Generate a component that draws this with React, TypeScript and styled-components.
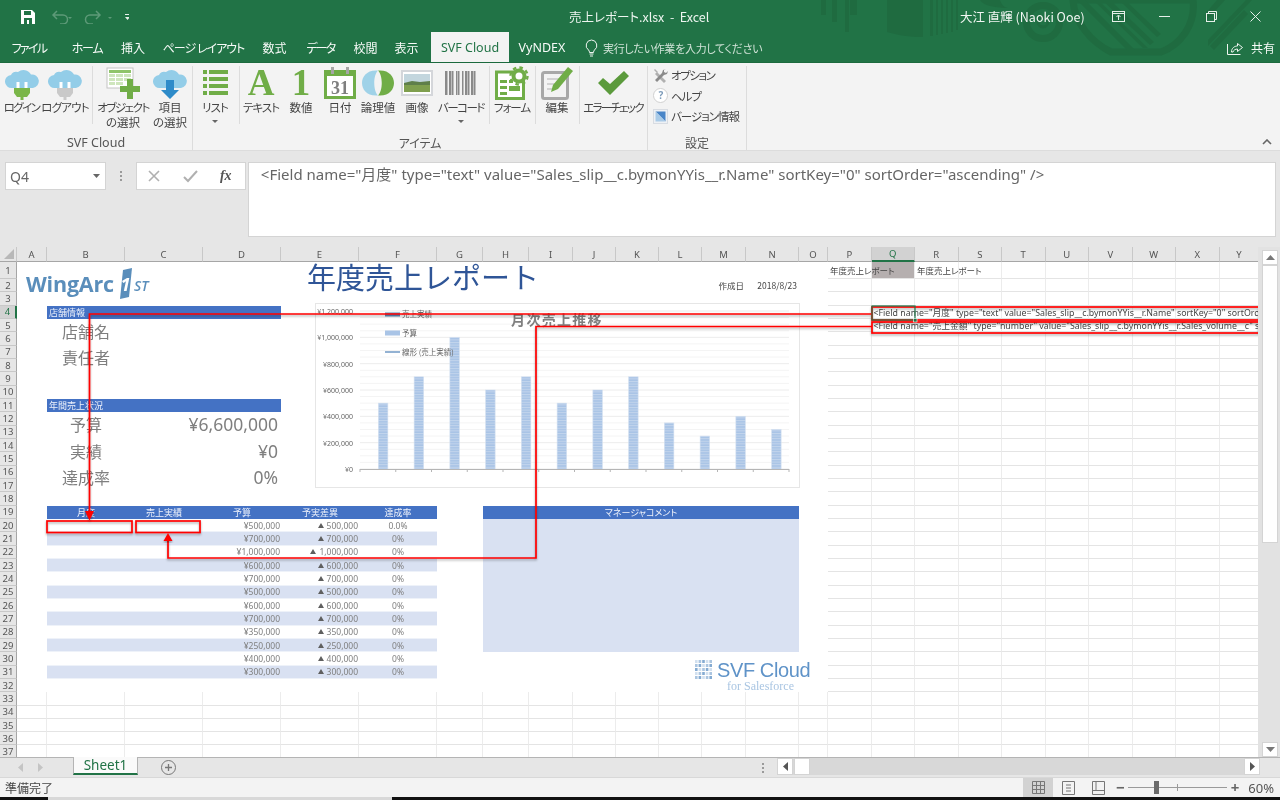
import styled, { createGlobalStyle } from 'styled-components';
import { Fragment } from 'react';

const GlobalStyle = createGlobalStyle`
  html, body { margin: 0; padding: 0; width: 1280px; height: 800px; overflow: hidden; background: #fff; }
  * { box-sizing: border-box; }
  body {
    font-family: "Noto Sans CJK JP", "Noto Sans", sans-serif;
    font-feature-settings: "palt" 1;
    color: #444;
  }
`;

const COLUMNS: [string, number][] = [
  ['A', 30], ['B', 78], ['C', 78], ['D', 78], ['E', 78], ['F', 78], ['G', 46], ['H', 46],
  ['I', 44], ['J', 43], ['K', 43], ['L', 43], ['M', 44], ['N', 53], ['O', 29], ['P', 43.5],
  ['Q', 43.5], ['R', 43.5], ['S', 43.5], ['T', 43.5], ['U', 43.5], ['V', 43.5], ['W', 43.5],
  ['X', 43.5], ['Y', 40],
];
const ROW_COUNT = 37;
const BUDGET = [500000, 700000, 1000000, 600000, 700000, 500000, 600000, 700000, 350000, 250000, 400000, 300000];
const yen = (n: number) => n.toLocaleString('en-US');

const GRID_TEMPLATE = `
  grid-template-columns: 17px ${COLUMNS.map(c => `${c[1]}px`).join(' ')};
  grid-template-rows: 15px 17px repeat(36, 13.333px);
`;

const Page = styled.div`
  width: 1280px;
  height: 800px;
  display: flex;
  flex-direction: column;
  overflow: hidden;
  background: #e6e6e6;
  filter: blur(0.3px);
`;

/* ---------- green header ---------- */
const Header = styled.header`
  position: relative;
  height: 63px;
  background: #217346;
  border-bottom: 1px solid #1c6a3e;
  color: #fff;
  overflow: hidden;
`;
const Pattern = styled.svg`
  position: absolute;
  left: 810px;
  top: 0;
`;
const TitleBar = styled.div`
  position: relative;
  height: 33px;
  display: flex;
  align-items: center;
  font-size: 12px;
`;
const Qat = styled.div`
  display: flex;
  align-items: center;
  width: 569px;
  padding-left: 21px;
`;
const DocTitle = styled.div`
  width: 391px;
  font-size: 12.5px;
  color: #eef5f0;
  white-space: pre;
`;
const UserName = styled.div`
  width: 152px;
  font-size: 12.5px;
  color: #f2f7f3;
  white-space: pre;
`;
const WinControls = styled.div`
  display: flex;
  align-items: center;
  gap: 31px;
`;
const TabRow = styled.nav`
  position: relative;
  height: 29px;
  display: flex;
  align-items: flex-end;
  font-size: 12px;
`;
const Tab = styled.div<{ $w: number; $ls?: number }>`
  width: ${p => p.$w}px;
  height: 29px;
  display: flex;
  align-items: center;
  justify-content: center;
  white-space: nowrap;
  letter-spacing: ${p => p.$ls ?? 0}px;
  color: #f6faf7;
`;
const ActiveTab = styled(Tab)`
  height: 30px;
  background: #f3f3f3;
  color: #217346;
  font-family: "Noto Sans", sans-serif;
  font-size: 12.5px;
`;
const LatinTab = styled(Tab)`
  font-family: "Noto Sans", sans-serif;
  font-size: 12.5px;
`;
const Hint = styled.div`
  display: flex;
  align-items: center;
  gap: 5px;
  margin-left: 10px;
  height: 29px;
  color: #cfe2d6;
  font-size: 11px;
  letter-spacing: -0.3px;
  white-space: nowrap;
`;
const Share = styled.div`
  margin-left: auto;
  padding-right: 5px;
  display: flex;
  align-items: center;
  gap: 8px;
  height: 29px;
  color: #f6faf7;
`;

/* ---------- ribbon ---------- */
const Ribbon = styled.section`
  position: relative;
  height: 88px;
  display: flex;
  background: #f3f3f3;
  border-bottom: 1px solid #dcdcdc;
  font-size: 11.5px;
  color: #444;
`;
const Group = styled.div<{ $w: number }>`
  width: ${p => p.$w}px;
  height: 85px;
  margin-top: 3px;
  display: flex;
  flex-direction: column;
  border-right: 1px solid #dcdcdc;
`;
const GroupBody = styled.div`
  flex: 1;
  display: flex;
`;
const GroupLabel = styled.div`
  height: 15px;
  line-height: 14px;
  text-align: center;
  font-size: 12px;
  color: #555;
`;
const LatinGroupLabel = styled(GroupLabel)`
  font-family: "Noto Sans", sans-serif;
  font-size: 12.5px;
`;
const RibbonButton = styled.div<{ $w: number }>`
  width: ${p => p.$w}px;
  display: flex;
  flex-direction: column;
  align-items: center;
  text-align: center;
`;
const IconSlot = styled.div`
  height: 34px;
  display: flex;
  align-items: center;
  justify-content: center;
`;
const ButtonLabel = styled.div<{ $ls?: number }>`
  line-height: 15px;
  white-space: nowrap;
  letter-spacing: ${p => p.$ls ?? 0}px;
`;
const Caret = styled.div`
  margin-top: 5px;
  width: 0;
  height: 0;
  border-left: 3px solid transparent;
  border-right: 3px solid transparent;
  border-top: 3px solid #666;
`;
const Divider = styled.div<{ $w: number }>`
  width: ${p => p.$w}px;
  height: 58px;
  display: flex;
  justify-content: center;
  &::after {
    content: '';
    width: 1px;
    background: #dcdcdc;
  }
`;
const BigLetter = styled.span`
  font-family: "Liberation Serif", serif;
  font-weight: 700;
  font-size: 37px;
  line-height: 34px;
  color: #70ad47;
`;
const SmallList = styled.div`
  display: flex;
  flex-direction: column;
  margin-top: -1px;
  padding-left: 5px;
`;
const SmallItem = styled.div<{ $ls: number }>`
  height: 20.5px;
  display: flex;
  align-items: center;
  gap: 3px;
  white-space: nowrap;
  letter-spacing: ${p => p.$ls}px;
`;
const Collapse = styled.svg`
  position: absolute;
  right: 8px;
  bottom: 5px;
`;

/* ---------- formula bar ---------- */
const FormulaBar = styled.section`
  height: 96px;
  padding: 11px 4px 0 5px;
  display: flex;
  align-items: flex-start;
  background: #e6e6e6;
`;
const NameBox = styled.div`
  width: 101px;
  height: 28px;
  display: flex;
  align-items: center;
  justify-content: space-between;
  padding: 0 5px 0 4px;
  background: #fff;
  border: 1px solid #d4d4d4;
  font-family: "Noto Sans", sans-serif;
  font-size: 14px;
  color: #666;
`;
const Dots = styled.div`
  width: 30px;
  height: 28px;
  display: flex;
  flex-direction: column;
  align-items: center;
  justify-content: center;
  gap: 2px;
  span { width: 2px; height: 2px; background: #9a9a9a; }
`;
const FxBox = styled.div`
  width: 110px;
  height: 28px;
  display: flex;
  align-items: center;
  gap: 22px;
  padding: 0 0 0 10px;
  background: #fff;
  border: 1px solid #d4d4d4;
`;
const FxLabel = styled.span`
  font-family: "Liberation Serif", serif;
  font-style: italic;
  font-weight: 700;
  font-size: 14px;
  color: #555;
`;
const FormulaInput = styled.div`
  width: 1029px;
  height: 75px;
  margin-left: 2px;
  padding: 1px 0 0 12px;
  background: #fff;
  border: 1px solid #d4d4d4;
  font-family: "Noto Sans", "Noto Sans CJK JP", sans-serif;
  font-size: 15px;
  line-height: 20px;
  color: #666;
  white-space: pre;
`;

/* ---------- sheet ---------- */
const SheetArea = styled.section`
  height: 510px;
  display: flex;
`;
const SheetWrap = styled.div`
  position: relative;
  width: 1258px;
  height: 510px;
  overflow: hidden;
  background: #fff;
`;
const CellGrid = styled.div`
  display: grid;
  ${GRID_TEMPLATE}
`;
const Layer = styled.div`
  position: absolute;
  inset: 0;
  display: grid;
  pointer-events: none;
  ${GRID_TEMPLATE}
`;
const Corner = styled.div`
  background: #e6e6e6;
  border-bottom: 1px solid #a6a6a6;
  border-right: 1px solid #c8c8c8;
  position: relative;
  &::after {
    content: '';
    position: absolute;
    right: 2px;
    bottom: 2px;
    border-style: solid;
    border-width: 0 0 10px 10px;
    border-color: transparent transparent #b8b8b8 transparent;
  }
`;
const ColHead = styled.div<{ $sel?: boolean }>`
  display: flex;
  align-items: center;
  justify-content: center;
  background: ${p => (p.$sel ? '#d2d2d2' : '#e6e6e6')};
  border-right: 1px solid #c8c8c8;
  border-bottom: ${p => (p.$sel ? '2px solid #217346' : '1px solid #a6a6a6')};
  font-family: "Noto Sans", sans-serif;
  font-size: 9.5px;
  color: ${p => (p.$sel ? '#217346' : '#555')};
`;
const RowHead = styled.div<{ $sel?: boolean }>`
  display: flex;
  align-items: center;
  justify-content: center;
  background: ${p => (p.$sel ? '#d2d2d2' : '#e6e6e6')};
  border-bottom: 1px solid #c8c8c8;
  border-right: ${p => (p.$sel ? '2px solid #217346' : '1px solid #a6a6a6')};
  font-family: "Noto Sans", sans-serif;
  font-size: 9.5px;
  color: ${p => (p.$sel ? '#217346' : '#555')};
`;
const GridCell = styled.div<{ $plain?: boolean; $shade?: boolean }>`
  background: ${p => (p.$shade ? '#b5afaf' : '#fff')};
  border-right: ${p => (p.$plain ? 'none' : '1px solid #ececec')};
  border-bottom: ${p => (p.$plain ? 'none' : '1px solid #e4e4e4')};
`;
const Area = styled.div<{ $area: string }>`
  grid-area: ${p => p.$area};
  min-width: 0;
  min-height: 0;
`;
const Band = styled(Area)<{ $center?: boolean }>`
  display: flex;
  align-items: center;
  justify-content: ${p => (p.$center ? 'center' : 'flex-start')};
  padding-left: ${p => (p.$center ? '0' : '2px')};
  background: #4472c4;
  color: #eef2fb;
  font-size: 9px;
`;
const LabelCell = styled(Area)`
  display: flex;
  align-items: center;
  justify-content: center;
  padding-bottom: 3px;
  font-size: 16px;
  color: #7f7f7f;
`;
const ValueCell = styled(Area)`
  display: flex;
  align-items: center;
  justify-content: flex-end;
  padding: 0 3px 3px 0;
  font-family: "Noto Sans", sans-serif;
  font-size: 17.5px;
  color: #7f7f7f;
`;
const SheetText = styled(Area)<{ $right?: boolean }>`
  display: flex;
  align-items: center;
  justify-content: ${p => (p.$right ? 'flex-end' : 'flex-start')};
  padding: 0 2px 2px;
  font-size: 8.5px;
  color: #444;
  white-space: nowrap;
`;
const FieldText = styled(Area)`
  display: flex;
  align-items: center;
  padding-left: 2px;
  font-family: "Noto Sans", "Noto Sans CJK JP", sans-serif;
  font-size: 8.8px;
  color: #444;
  white-space: nowrap;
  overflow: hidden;
`;
const Title = styled(Area)`
  font-size: 29px;
  font-feature-settings: normal;
  line-height: 29px;
  color: #2f5597;
  white-space: nowrap;
  padding-left: 26px;
`;
const Logo = styled(Area)`
  display: flex;
  align-items: center;
  padding-left: 9px;
  color: #5a8ebb;
  font-family: "Open Sans", sans-serif;
  font-weight: 700;
`;
const LogoWord = styled.span`
  font-size: 21.5px;
  letter-spacing: -0.2px;
  margin-right: 5px;
`;
const LogoSt = styled.span`
  font-size: 14px;
  font-style: italic;
  font-weight: 600;
  margin: 3px 0 0 1px;
`;
const CommentBody = styled(Area)`
  background: #d9e1f2;
`;
const SvfLogo = styled(Area)`
  display: flex;
  padding: 8px 0 0 36px;
  gap: 4px;
`;
const SvfName = styled.div`
  font-family: "Liberation Sans", sans-serif;
  font-size: 20px;
  line-height: 21px;
  color: #5f93c8;
  letter-spacing: -0.4px;
`;
const SvfFor = styled.div`
  font-family: "Liberation Serif", serif;
  font-size: 12px;
  line-height: 11px;
  padding-left: 10px;
  color: #a9c5e2;
`;

/* ---------- report table ---------- */
const ReportTable = styled(Area)`
  display: grid;
  grid-template-columns: 78px 78px 78px 78px 78px;
  grid-template-rows: repeat(12, 13.333px);
  font-family: "Noto Sans", "Noto Sans CJK JP", sans-serif;
  font-size: 8.5px;
  color: #808080;
`;
const Td = styled.div<{ $shade: boolean; $align: string }>`
  display: flex;
  align-items: center;
  justify-content: ${p => p.$align};
  gap: 3px;
  padding-right: ${p => (p.$align === 'flex-end' ? '1px' : '0')};
  background: ${p => (p.$shade ? '#d9e1f2' : '#fff')};
  border-bottom: 1px solid #eef2f9;
`;
const Tri = styled.span`
  width: 0;
  height: 0;
  border-left: 3px solid transparent;
  border-right: 3px solid transparent;
  border-bottom: 5px solid #5f5f5f;
`;

/* ---------- overlays ---------- */
const Chart = styled.svg`
  position: absolute;
  left: 315px;
  top: 56px;
`;
const Annotations = styled.svg`
  position: absolute;
  left: 0;
  top: 0;
`;

/* ---------- scrollbars ---------- */
const VScroll = styled.aside`
  width: 22px;
  height: 510px;
  padding: 3px 2px 0 4px;
  display: flex;
  flex-direction: column;
  background: #e2e2e2;
`;
const ScrollBtn = styled.div`
  height: 15px;
  display: flex;
  align-items: center;
  justify-content: center;
  background: #fff;
  border: 1px solid #d4d4d4;
`;
const VThumb = styled.div`
  height: 278px;
  background: #fff;
  border: 1px solid #d4d4d4;
  margin-bottom: 199px;
`;

/* ---------- bottom ---------- */
const SheetTabs = styled.section`
  height: 20px;
  display: flex;
  align-items: flex-start;
  background: #e6e6e6;
  border-top: 1px solid #b4b4b4;
`;
const TabNav = styled.div`
  width: 73px;
  height: 19px;
  display: flex;
  align-items: center;
  gap: 15px;
  padding-left: 18px;
`;
const SheetTab = styled.div`
  width: 65px;
  height: 18px;
  display: flex;
  align-items: center;
  justify-content: center;
  margin-top: -1px;
  background: #fafafa;
  border: 1px solid #b4b4b4;
  border-top: none;
  border-bottom: 2px solid #217346;
  font-family: "Noto Sans", sans-serif;
  font-size: 13.5px;
  color: #217346;
`;
const AddSheet = styled.svg`
  margin: 2px 0 0 23px;
`;
const HScrollWrap = styled.div`
  margin-left: auto;
  margin-right: 20px;
  width: 511px;
  height: 19px;
  display: flex;
`;
const HDots = styled(Dots)`
  width: 28px;
  height: 19px;
`;
const HScroll = styled.div`
  flex: 1;
  height: 17px;
  display: flex;
  background: #d8d8d8;
`;
const HBtn = styled.div`
  width: 16px;
  height: 17px;
  display: flex;
  align-items: center;
  justify-content: center;
  background: #fff;
  border: 1px solid #d4d4d4;
`;
const HThumb = styled(HBtn)`
  margin: 0 auto 0 1px;
`;
const StatusBar = styled.footer`
  height: 20px;
  display: flex;
  align-items: center;
  padding-left: 5px;
  background: #f3f3f3;
  border-top: 1px solid #d8d8d8;
  font-size: 12px;
  color: #444;
`;
const StatusRight = styled.div`
  margin-left: auto;
  display: flex;
  align-items: center;
  height: 19px;
  padding-right: 6px;
`;
const ViewBtn = styled.div<{ $active?: boolean }>`
  width: 30px;
  height: 19px;
  display: flex;
  align-items: center;
  justify-content: center;
  background: ${p => (p.$active ? '#d2d2d2' : 'transparent')};
`;
const ZoomTrack = styled.div`
  position: relative;
  width: 99px;
  height: 1px;
  margin: 0 4px 0 3px;
  background: #9a9a9a;
  &::before {
    content: '';
    position: absolute;
    left: 26px;
    top: -6px;
    width: 5px;
    height: 13px;
    background: #6a6a6a;
  }
  &::after {
    content: '';
    position: absolute;
    left: 49px;
    top: -3px;
    width: 1px;
    height: 7px;
    background: #9a9a9a;
  }
`;
const ZoomSign = styled.span`
  font-family: "Noto Sans", sans-serif;
  font-size: 15px;
  font-weight: 700;
  line-height: 15px;
  color: #666;
`;
const ZoomMinus = styled(ZoomSign)`
  margin-left: 3px;
`;
const ZoomValue = styled.span`
  margin-left: 9px;
  font-family: "Noto Sans", sans-serif;
  font-size: 13px;
  color: #555;
`;
const BottomEdge = styled.div`
  height: 3px;
  display: flex;
  background: #111;
`;
const EdgeLight = styled.div`
  width: 344px;
  margin-left: 48px;
  background: #d8d8d8;
`;

/* ---------- icons ---------- */
const Cloud = () => (
  <path
    d="M7 21a6.500 6.500 0 0 1-1-13a6 6 0 0 1 7-3a8.500 8.500 0 0 1 13 2.500a6.800 6.800 0 0 1 2 13.500z"
    fill="#93cde8"
  />
);
const PlugIcon = ({ color }: { color: string }) => (
  <svg width="34" height="33" viewBox="0 0 34 33">
    <Cloud />
    <rect x="11.500" y="15" width="3" height="6.500" fill="#fff" />
    <rect x="19.500" y="15" width="3" height="6.500" fill="#fff" />
    <path d="M9 21h16v5l-3 4h-10l-3-4z" fill={color} />
    <rect x="15.500" y="30" width="3" height="3" fill={color} />
  </svg>
);
const ObjectIcon = () => (
  <svg width="34" height="33" viewBox="0 0 34 33">
    <rect x="1" y="1" width="26" height="20" fill="#fff" stroke="#c4c4c4" />
    <path d="M3 3h22v3H3z" fill="#8fc46a" />
    <path d="M3 7h6v3H3zM10 7h7v3h-7zM18 7h7v3h-7zM3 11h6v3H3zM10 11h7v3h-7zM18 11h7v3h-7zM3 15h6v3H3zM10 15h7v3h-7z" fill="#cfe6bd" />
    <path d="M21 12h6v7h7v6h-7v7h-6v-7h-7v-6h7z" fill="#70ad47" />
  </svg>
);
const ItemIcon = () => (
  <svg width="34" height="33" viewBox="0 0 34 33">
    <Cloud />
    <path d="M13 13h8v10h5l-9 9-9-9h5z" fill="#2e8bc9" />
  </svg>
);
const ListIcon = () => (
  <svg width="25" height="26" viewBox="0 0 25 26" fill="#70ad47">
    <rect x="0" y="0" width="4" height="4" />
    <rect x="6" y="0" width="19" height="4" />
    <rect x="0" y="7" width="4" height="4" />
    <rect x="6" y="7" width="19" height="4" />
    <rect x="0" y="14" width="4" height="4" />
    <rect x="6" y="14" width="19" height="4" />
    <rect x="0" y="21" width="4" height="4" />
    <rect x="6" y="21" width="19" height="4" />
  </svg>
);
const DateIcon = () => (
  <svg width="32" height="33" viewBox="0 0 32 33">
    <rect x="0" y="3" width="32" height="29" fill="#70ad47" />
    <rect x="3" y="9" width="26" height="20" fill="#fff" />
    <rect x="7" y="0" width="3" height="7" fill="#a6a6a6" />
    <rect x="22" y="0" width="3" height="7" fill="#a6a6a6" />
    <text x="16" y="27" textAnchor="middle" fontFamily="Liberation Serif, serif" fontWeight="700" fontSize="18" fill="#7f7f7f">31</text>
  </svg>
);
const LogicIcon = () => (
  <svg width="32" height="26" viewBox="0 0 32 26">
    <path d="M16 0.500C5 -0.500 0 6.500 0 13C0 19.500 5 26.500 16 25.500C11 20.500 11 5.500 16 0.500z" fill="#9fd2e8" />
    <path d="M16 0.500C27 -0.500 32 6.500 32 13C32 19.500 27 26.500 16 25.500C21 20.500 21 5.500 16 0.500z" fill="#70ad47" />
  </svg>
);
const ImageIcon = () => (
  <svg width="32" height="26" viewBox="0 0 32 26">
    <rect x="1" y="1" width="30" height="24" fill="#fff" stroke="#d4d6da" strokeWidth="2" />
    <rect x="3" y="4" width="26" height="9" fill="#c3d6de" />
    <path d="M3 13l8-2 8 1 10-1v4H3z" fill="#5f7f4a" />
    <rect x="3" y="15" width="26" height="7" fill="#7f9f4e" />
  </svg>
);
const BarcodeIcon = () => (
  <svg width="32" height="24" viewBox="0 0 32 24" fill="#8a8a8a">
    {[0, 4, 7, 11, 13, 17, 20, 23, 26, 29].map(x => (
      <rect key={x} x={x} y="0" width={x % 2 ? 1.5 : 2.5} height="24" />
    ))}
  </svg>
);
const FormIcon = () => (
  <svg width="34" height="34" viewBox="0 0 34 34">
    <path d="M1.500 6h19v8h8v18.500h-27z" fill="#fff" stroke="#70ad47" strokeWidth="3" />
    <path d="M5 14h7v3H5zM14 14h4v3h-4zM5 20h7v3H5zM14 20h11v5H14zM5 26h7v3H5z" fill="#70ad47" />
    <circle cx="24" cy="10" r="5.500" fill="#fff" stroke="#70ad47" strokeWidth="4" />
    <circle cx="24" cy="10" r="8.500" fill="none" stroke="#70ad47" strokeWidth="2.400" strokeDasharray="3.500 3.200" />
  </svg>
);
const EditIcon = () => (
  <svg width="33" height="33" viewBox="0 0 33 33">
    <rect x="1.500" y="5.500" width="25" height="26" rx="2" fill="#f3f3f3" stroke="#a8a8a8" strokeWidth="3" />
    <path d="M6 12h16M6 17h10M6 22h8" stroke="#c8c8c8" strokeWidth="1.500" />
    <path d="M27 0l5 4-15 18-7 3 2-7z" fill="#70ad47" />
  </svg>
);
const CheckIcon = () => (
  <svg width="31" height="24" viewBox="0 0 31 24">
    <path d="M0 12l5-5 7 6L26 0l5 5-19 19z" fill="#5b9a3c" />
  </svg>
);
const ToolsIcon = () => (
  <svg width="15" height="15" viewBox="0 0 15 15">
    <path d="M2 1l3 3-1 1L1 2zM4 4l9 9-2 2-9-9z" fill="#b0b0b0" />
    <path d="M13 1l-3 1-1 3-7 7 2 2 7-7 3-1 1-3-2 2-2-1 0-2z" fill="#8a8a8a" />
  </svg>
);
const HelpIcon = () => (
  <svg width="15" height="15" viewBox="0 0 15 15">
    <circle cx="7.500" cy="7.500" r="7" fill="#fff" stroke="#d0d0d0" />
    <text x="7.500" y="11" textAnchor="middle" fontSize="10" fontWeight="700" fontFamily="Noto Sans, sans-serif" fill="#7f9dbb">?</text>
  </svg>
);
const VersionIcon = () => (
  <svg width="15" height="15" viewBox="0 0 15 15">
    <rect x="0.500" y="0.500" width="14" height="14" fill="#eef1f5" stroke="#d8dce2" />
    <path d="M2.500 2.500h10v10z" fill="#4a86c8" />
    <path d="M2.500 2.500v10h10z" fill="#a9cbe8" />
  </svg>
);

const Ribbons = () => (
  <Ribbon>
    <Group $w={193}>
      <GroupBody>
        <RibbonButton $w={43}>
          <IconSlot><PlugIcon color="#7ab648" /></IconSlot>
          <ButtonLabel $ls={-1.6}>ログイン</ButtonLabel>
        </RibbonButton>
        <RibbonButton $w={44}>
          <IconSlot><PlugIcon color="#c9c9c9" /></IconSlot>
          <ButtonLabel $ls={-0.8}>ログアウト</ButtonLabel>
        </RibbonButton>
        <Divider $w={10} />
        <RibbonButton $w={52}>
          <IconSlot><ObjectIcon /></IconSlot>
          <ButtonLabel $ls={-1.5}>オブジェクト</ButtonLabel>
          <ButtonLabel>の選択</ButtonLabel>
        </RibbonButton>
        <RibbonButton $w={42}>
          <IconSlot><ItemIcon /></IconSlot>
          <ButtonLabel>項目</ButtonLabel>
          <ButtonLabel>の選択</ButtonLabel>
        </RibbonButton>
      </GroupBody>
      <LatinGroupLabel>SVF Cloud</LatinGroupLabel>
    </Group>
    <Group $w={455}>
      <GroupBody>
        <RibbonButton $w={44}>
          <IconSlot><ListIcon /></IconSlot>
          <ButtonLabel $ls={-1}>リスト</ButtonLabel>
          <Caret />
        </RibbonButton>
        <Divider $w={4} />
        <RibbonButton $w={40}>
          <IconSlot><BigLetter>A</BigLetter></IconSlot>
          <ButtonLabel $ls={-1}>テキスト</ButtonLabel>
        </RibbonButton>
        <RibbonButton $w={40}>
          <IconSlot><BigLetter>1</BigLetter></IconSlot>
          <ButtonLabel>数値</ButtonLabel>
        </RibbonButton>
        <RibbonButton $w={38}>
          <IconSlot><DateIcon /></IconSlot>
          <ButtonLabel>日付</ButtonLabel>
        </RibbonButton>
        <RibbonButton $w={38}>
          <IconSlot><LogicIcon /></IconSlot>
          <ButtonLabel>論理値</ButtonLabel>
        </RibbonButton>
        <RibbonButton $w={40}>
          <IconSlot><ImageIcon /></IconSlot>
          <ButtonLabel>画像</ButtonLabel>
        </RibbonButton>
        <RibbonButton $w={48}>
          <IconSlot><BarcodeIcon /></IconSlot>
          <ButtonLabel $ls={-1.5}>バーコード</ButtonLabel>
          <Caret />
        </RibbonButton>
        <Divider $w={8} />
        <RibbonButton $w={38}>
          <IconSlot><FormIcon /></IconSlot>
          <ButtonLabel $ls={-1}>フォーム</ButtonLabel>
        </RibbonButton>
        <Divider $w={8} />
        <RibbonButton $w={36}>
          <IconSlot><EditIcon /></IconSlot>
          <ButtonLabel>編集</ButtonLabel>
        </RibbonButton>
        <Divider $w={8} />
        <RibbonButton $w={60}>
          <IconSlot><CheckIcon /></IconSlot>
          <ButtonLabel $ls={-1.7}>エラーチェック</ButtonLabel>
        </RibbonButton>
      </GroupBody>
      <GroupLabel>アイテム</GroupLabel>
    </Group>
    <Group $w={99}>
      <GroupBody>
        <SmallList>
          <SmallItem $ls={-1.4}><ToolsIcon />オプション</SmallItem>
          <SmallItem $ls={-1}><HelpIcon />ヘルプ</SmallItem>
          <SmallItem $ls={-1}><VersionIcon />バージョン情報</SmallItem>
        </SmallList>
      </GroupBody>
      <GroupLabel>設定</GroupLabel>
    </Group>
    <Collapse width="10" height="6" viewBox="0 0 10 6">
      <path d="M1 5l4-4 4 4" fill="none" stroke="#666" strokeWidth="1.600" />
    </Collapse>
  </Ribbon>
);

const SheetCells = () => (
  <CellGrid>
    <Corner />
    {COLUMNS.map(([name]) => (
      <ColHead key={name} $sel={name === 'Q'}>{name}</ColHead>
    ))}
    {Array.from({ length: ROW_COUNT }, (_, r) => (
      <Fragment key={r}>
        <RowHead $sel={r === 3}>{r + 1}</RowHead>
        {COLUMNS.map(([name], c) => (
          <GridCell key={name} $plain={c < 15 && r < 32} $shade={name === 'Q' && r === 0} />
        ))}
      </Fragment>
    ))}
  </CellGrid>
);

const ColumnChart = () => {
  const plotLeft = 45;
  const plotRight = 474;
  const base = 166;
  const perYen = 158 / 1200000;
  const slot = (plotRight - plotLeft) / 12;
  return (
    <Chart width="485" height="185" viewBox="0 0 485 185">
      <defs>
        <pattern id="barFill" width="4" height="2.600" patternUnits="userSpaceOnUse">
          <rect width="4" height="2.600" fill="#a9c4e6" />
          <rect width="4" height="1" fill="#c3d5ec" />
        </pattern>
      </defs>
      <rect x="0.500" y="0.500" width="484" height="184" fill="#fff" stroke="#e6e6e6" />
      {Array.from({ length: 25 }, (_, i) => (
        <line key={i} x1={plotLeft} x2={plotRight} y1={base - (i * 158) / 24} y2={base - (i * 158) / 24}
          stroke={i % 4 === 0 ? '#ececec' : '#f4f4f4'} />
      ))}
      {[0, 200000, 400000, 600000, 800000, 1000000, 1200000].map(v => (
        <text key={v} x="38" y={base - v * perYen + 3} textAnchor="end" fontSize="7"
          fontFamily="Noto Sans, sans-serif" fill="#666">¥{yen(v)}</text>
      ))}
      {BUDGET.map((v, i) => (
        <rect key={i} x={plotLeft + (i + 0.5) * slot + 0.5} y={base - v * perYen} width="9.500" height={v * perYen}
          fill="url(#barFill)" stroke="#d3e0f1" strokeWidth="0.600" />
      ))}
      <line x1={plotLeft} x2={plotRight} y1={base + 0.5} y2={base + 0.5} stroke="#b5b5b5" />
      {Array.from({ length: 13 }, (_, i) => (
        <line key={i} x1={plotLeft + i * slot} x2={plotLeft + i * slot} y1={base} y2={base + 3} stroke="#b5b5b5" />
      ))}
      <rect x="70" y="9.500" width="15" height="4" fill="#5a87b3" />
      <text x="87" y="14" fontSize="7.500" fill="#666">売上実績</text>
      <rect x="70" y="27.500" width="15" height="5" fill="#a9c4e6" />
      <text x="87" y="33" fontSize="7.500" fill="#666">予算</text>
      <line x1="70" x2="85" y1="49" y2="49" stroke="#4a7fb5" strokeWidth="1.200" />
      <text x="87" y="52" fontSize="7.500" fill="#666">線形 (売上実績)</text>
      <text x="242" y="22" textAnchor="middle" fontSize="14" fontWeight="700" letterSpacing="1.300" fill="#7f7f7f">月次売上推移</text>
    </Chart>
  );
};

const RedLines = () => (
  <Annotations width="1258" height="510" viewBox="0 247 1258 510">
    <defs>
      <filter id="lineShadow" x="-5%" y="-5%" width="110%" height="110%">
        <feDropShadow dx="0" dy="1.500" stdDeviation="1" floodColor="#000" floodOpacity="0.350" />
      </filter>
    </defs>
    <g filter="url(#lineShadow)" fill="none" stroke="#f00" strokeWidth="1.700">
      <path d="M872 314H89.500V512" />
      <path d="M872 326.500H536V558H168V541" />
      <rect x="47" y="521" width="85" height="11.500" />
      <rect x="136" y="521" width="64" height="11.500" />
      <rect x="872" y="307" width="387" height="13" />
      <rect x="872" y="322" width="387" height="11" />
    </g>
    <g filter="url(#lineShadow)" fill="#f00">
      <path d="M89.500 520.500l-4.500-9.500h9z" />
      <path d="M168 533l-4.500 8h9z" />
    </g>
    <rect x="872" y="306" width="43" height="14" fill="none" stroke="#217346" strokeWidth="1.200" />
    <rect x="913.500" y="318.500" width="3.500" height="3.500" fill="#217346" stroke="#fff" strokeWidth="0.600" />
  </Annotations>
);

const App = () => (
  <Page>
    <GlobalStyle />
    <Header>
      <Pattern width="470" height="63" viewBox="810 0 470 63" fill="#1f6b40">
        <path d="M821 0h5v15h-5zM832 0h5v22h-5zM845 0h4v32h-4zM850 0h7v15h-7z" />
        <path d="M887 0h36v37c-14 0-26-2-36-5z" />
        <path d="M930 0h3v36h-3zM936 0h2v35h-2zM941 0h2v34h-2zM946 0h2v33h-2zM951 0h2v32h-2zM956 0h2v30h-2z" />
        <path d="M980 0h20c2 6 5 8 9 8-12 0-26-2-29-8z" />
        <circle cx="1043" cy="22" r="16.500" fill="none" stroke="#1f6b40" strokeWidth="7" />
        <circle cx="1043" cy="22" r="5" fill="none" stroke="#1f6b40" strokeWidth="3" />
        <path d="M1073 0h120c3 25-13 45-32 52h-50c-20-10-37-30-38-52z" fill="none" stroke="#1f6b40" strokeWidth="7" />
        <path d="M1085 0l50 50h-8l-50-50zM1098 0l50 48h-5l-50-48zM1110 0l44 42-4 3-48-45zM1125 0l36 34-4 3-38-37z" />
        <path d="M1205 14l12-14h8l-20 22zM1208 40l38-40h6l-44 46zM1210 46l34-36 4 4-34 36z" />
      </Pattern>
      <TitleBar>
        <Qat>
          <svg width="108" height="14" viewBox="0 0 108 14">
            <path d="M0 0h11l3 3v11H0z" fill="#fff" />
            <rect x="3" y="1" width="7" height="4" fill="#217346" />
            <rect x="3" y="8" width="8" height="6" fill="#217346" />
            <rect x="6" y="10" width="2" height="4" fill="#fff" />
            <path d="M33 5h9a4 4 0 0 1 0 9h-3M36 1l-4 4 4 4" fill="none" stroke="#5d9a78" strokeWidth="1.500" />
            <path d="M47 7h4l-2 2z" fill="#5d9a78" />
            <path d="M78 5h-9a4 4 0 0 0 0 9h3M75 1l4 4-4 4" fill="none" stroke="#5d9a78" strokeWidth="1.500" />
            <path d="M87 7h4l-2 2z" fill="#5d9a78" />
            <path d="M104 4h5v1h-5zM104 7h5l-2.500 3z" fill="#e6f0ea" />
          </svg>
        </Qat>
        <DocTitle>{'売上レポート.xlsx  -  Excel'}</DocTitle>
        <UserName>{'大江 直輝 (Naoki Ooe)'}</UserName>
        <WinControls>
          <svg width="13" height="11" viewBox="0 0 13 11" fill="none" stroke="#e6f0ea">
            <rect x="0.500" y="0.500" width="12" height="10" />
            <path d="M0 2.500h13M6.500 9V4.500M4.500 6l2-2 2 2" />
          </svg>
          <svg width="17" height="11" viewBox="0 0 17 11" stroke="#e6f0ea"><path d="M3 5.500h11" /></svg>
          <svg width="15" height="11" viewBox="0 0 15 11" fill="none" stroke="#e6f0ea">
            <rect x="2.500" y="2.500" width="8" height="8" />
            <path d="M4.500 2.500V.5h8v8h-2" />
          </svg>
          <svg width="11" height="11" viewBox="0 0 11 11" stroke="#e6f0ea"><path d="M.5.500l10 10M10.500.5l-10 10" /></svg>
        </WinControls>
      </TitleBar>
      <TabRow>
        <Tab $w={58} $ls={-1.7}>ファイル</Tab>
        <Tab $w={58} $ls={-1.2}>ホーム</Tab>
        <Tab $w={34}>挿入</Tab>
        <Tab $w={107} $ls={-1}>ページ レイアウト</Tab>
        <Tab $w={35}>数式</Tab>
        <Tab $w={57} $ls={-1.8}>データ</Tab>
        <Tab $w={33}>校閲</Tab>
        <Tab $w={49}>表示</Tab>
        <ActiveTab $w={78}>SVF Cloud</ActiveTab>
        <LatinTab $w={66}>VyNDEX</LatinTab>
        <Hint>
          <svg width="13" height="18" viewBox="0 0 13 18" fill="none" stroke="#eef5f0">
            <path d="M6.500 1a5.500 5.500 0 0 0-3 10c.6.500 1 1.500 1 2.500h4c0-1 .4-2 1-2.500a5.500 5.500 0 0 0-3-10zM4.500 15h4M5 17h3" />
          </svg>
          実行したい作業を入力してください
        </Hint>
        <Share>
          <svg width="16" height="14" viewBox="0 0 16 14" fill="none" stroke="#eef5f0">
            <path d="M.5 3v10.500h13M4.500 11c0-4 3-6 6-6V2.500l5 4-5 4V8c-2 0-4 1-4.500 3z" />
          </svg>
          共有
        </Share>
      </TabRow>
    </Header>

    <Ribbons />

    <FormulaBar>
      <NameBox>
        Q4
        <svg width="7" height="4" viewBox="0 0 7 4"><path d="M0 0h7L3.500 4z" fill="#666" /></svg>
      </NameBox>
      <Dots><span /><span /><span /></Dots>
      <FxBox>
        <svg width="14" height="14" viewBox="0 0 14 14" stroke="#b0b0b0" strokeWidth="1.600"><path d="M2 2l10 10M12 2L2 12" /></svg>
        <svg width="15" height="14" viewBox="0 0 15 14" fill="none" stroke="#b0b0b0" strokeWidth="2"><path d="M1 8l4 4 9-10" /></svg>
        <FxLabel>fx</FxLabel>
      </FxBox>
      <FormulaInput>{'<Field name="月度" type="text" value="Sales_slip__c.bymonYYis__r.Name" sortKey="0" sortOrder="ascending" />'}</FormulaInput>
    </FormulaBar>

    <SheetArea>
      <SheetWrap>
        <SheetCells />
        <Layer>
          <Logo $area="2 / 2 / 5 / 5">
            <LogoWord>WingArc</LogoWord>
            <svg width="14" height="31" viewBox="0 0 14 31">
              <path d="M4 2l9-2-3 29-9 2z" fill="#5a8ebb" />
              <text x="6.500" y="23" textAnchor="middle" fontSize="18" fontWeight="700" fontStyle="italic" fontFamily="Open Sans, sans-serif" fill="#fff">1</text>
            </svg>
            <LogoSt>ST</LogoSt>
          </Logo>
          <Title $area="2 / 6 / 5 / 10">年度売上レポート</Title>
          <SheetText $area="3 / 14 / 4 / 15" $right>作成日</SheetText>
          <SheetText $area="3 / 15 / 4 / 16" $right>2018/8/23</SheetText>

          <Band $area="5 / 3 / 6 / 6">店舗情報</Band>
          <LabelCell $area="6 / 3 / 8 / 4">店舗名</LabelCell>
          <LabelCell $area="8 / 3 / 10 / 4">責任者</LabelCell>

          <Band $area="12 / 3 / 13 / 6">年間売上状況</Band>
          <LabelCell $area="13 / 3 / 15 / 4">予算</LabelCell>
          <ValueCell $area="13 / 4 / 15 / 6">¥6,600,000</ValueCell>
          <LabelCell $area="15 / 3 / 17 / 4">実績</LabelCell>
          <ValueCell $area="15 / 4 / 17 / 6">¥0</ValueCell>
          <LabelCell $area="17 / 3 / 19 / 4">達成率</LabelCell>
          <ValueCell $area="17 / 4 / 19 / 6">0%</ValueCell>

          <Band $area="20 / 3 / 21 / 4" $center>月度</Band>
          <Band $area="20 / 4 / 21 / 5" $center>売上実績</Band>
          <Band $area="20 / 5 / 21 / 6" $center>予算</Band>
          <Band $area="20 / 6 / 21 / 7" $center>予実差異</Band>
          <Band $area="20 / 7 / 21 / 8" $center>達成率</Band>
          <ReportTable $area="21 / 3 / 33 / 8">
            {BUDGET.map((v, i) => (
              <Fragment key={i}>
                <Td $shade={i % 2 === 1} $align="flex-end" />
                <Td $shade={i % 2 === 1} $align="flex-end" />
                <Td $shade={i % 2 === 1} $align="flex-end">¥{yen(v)}</Td>
                <Td $shade={i % 2 === 1} $align="flex-end"><Tri />{yen(v)}</Td>
                <Td $shade={i % 2 === 1} $align="center">{i === 0 ? '0.0%' : '0%'}</Td>
              </Fragment>
            ))}
          </ReportTable>

          <Band $area="20 / 9 / 21 / 16" $center>マネージャコメント</Band>
          <CommentBody $area="21 / 9 / 31 / 16" />
          <SvfLogo $area="31 / 13 / 34 / 17">
            <svg width="18" height="20" viewBox="0 0 18 20" fill="#7ea6d0">
              {Array.from({ length: 25 }, (_, i) => (
                <rect key={i} x={(i % 5) * 3.6} y={Math.floor(i / 5) * 4} width="2.600" height="3" opacity={0.35 + (((i % 5) + Math.floor(i / 5)) % 3) * 0.3} />
              ))}
            </svg>
            <div>
              <SvfName>SVF Cloud</SvfName>
              <SvfFor>for Salesforce</SvfFor>
            </div>
          </SvfLogo>

          <SheetText $area="2 / 17 / 3 / 20">年度売上レポート</SheetText>
          <SheetText $area="2 / 19 / 3 / 22">年度売上レポート</SheetText>
          <FieldText $area="5 / 18 / 6 / 27">{'<Field name="月度" type="text" value="Sales_slip__c.bymonYYis__r.Name" sortKey="0" sortOrder="ascending" />'}</FieldText>
          <FieldText $area="6 / 18 / 7 / 27">{'<Field name="売上金額" type="number" value="Sales_slip__c.bymonYYis__r.Sales_volume__c" sortKey="0" />'}</FieldText>
        </Layer>
        <ColumnChart />
        <RedLines />
      </SheetWrap>
      <VScroll>
        <ScrollBtn>
          <svg width="9" height="5" viewBox="0 0 9 5"><path d="M4.500 0L9 5H0z" fill="#777" /></svg>
        </ScrollBtn>
        <VThumb />
        <ScrollBtn>
          <svg width="9" height="5" viewBox="0 0 9 5"><path d="M4.500 5L9 0H0z" fill="#777" /></svg>
        </ScrollBtn>
      </VScroll>
    </SheetArea>

    <SheetTabs>
      <TabNav>
        <svg width="5" height="9" viewBox="0 0 5 9"><path d="M5 0v9L0 4.500z" fill="#c4c4c4" /></svg>
        <svg width="5" height="9" viewBox="0 0 5 9"><path d="M0 0v9l5-4.500z" fill="#c4c4c4" /></svg>
      </TabNav>
      <SheetTab>Sheet1</SheetTab>
      <AddSheet width="15" height="15" viewBox="0 0 15 15" fill="none" stroke="#777">
        <circle cx="7.500" cy="7.500" r="7" />
        <path d="M7.500 4v7M4 7.500h7" strokeWidth="1.300" />
      </AddSheet>
      <HScrollWrap>
        <HDots><span /><span /><span /></HDots>
        <HScroll>
          <HBtn><svg width="5" height="9" viewBox="0 0 5 9"><path d="M5 0v9L0 4.500z" fill="#555" /></svg></HBtn>
          <HThumb />
          <HBtn><svg width="5" height="9" viewBox="0 0 5 9"><path d="M0 0v9l5-4.500z" fill="#555" /></svg></HBtn>
        </HScroll>
      </HScrollWrap>
    </SheetTabs>

    <StatusBar>
      準備完了
      <StatusRight>
        <ViewBtn $active>
          <svg width="13" height="13" viewBox="0 0 13 13" fill="none" stroke="#777"><path d="M.5.500h12v12H.5zM4.500.5v12M8.500.5v12M.5 4.500h12M.5 8.500h12" /></svg>
        </ViewBtn>
        <ViewBtn>
          <svg width="13" height="14" viewBox="0 0 13 14" fill="none" stroke="#777"><path d="M.5.500h12v13H.5zM4 4h5M4 7h5M4 10h5" /></svg>
        </ViewBtn>
        <ViewBtn>
          <svg width="13" height="14" viewBox="0 0 13 14" fill="none" stroke="#777"><path d="M.5.500h12v13H.5zM.5 9.500h12M4 .5v9" /></svg>
        </ViewBtn>
        <ZoomMinus>−</ZoomMinus>
        <ZoomTrack />
        <ZoomSign>+</ZoomSign>
        <ZoomValue>60%</ZoomValue>
      </StatusRight>
    </StatusBar>
    <BottomEdge><EdgeLight /></BottomEdge>
  </Page>
);

export default App;
